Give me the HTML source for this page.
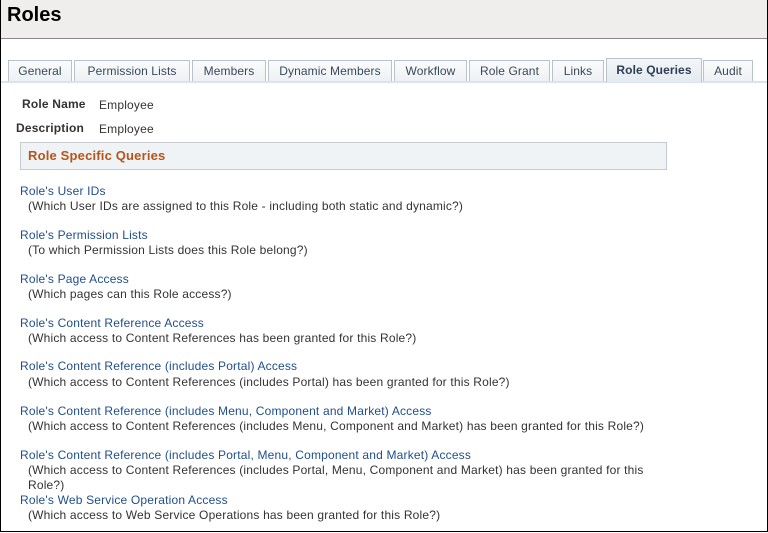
<!DOCTYPE html>
<html><head><style>
body{margin:0;width:768px;height:533px;overflow:hidden;font-family:"Liberation Sans",Arial,sans-serif;font-size:12px;color:#333;background:#fff;letter-spacing:0.18px}
.frame{position:absolute;left:0;top:0;width:766px;height:531px;border:1px solid #000;border-top:none}
.hdr{position:absolute;left:1px;top:0;width:766px;height:38px;background:#efeeec;border-bottom:1px solid #8a8a8a}
.hdr h1{margin:0;position:absolute;left:6px;top:4px;font-size:20px;font-weight:bold;color:#000;letter-spacing:0}
.tab{position:absolute;top:60px;height:20px;line-height:21px;border:1px solid #b8c2cc;border-bottom:none;background:linear-gradient(#fafbfc,#eef1f4);color:#3a4a5a;text-align:center;font-size:12px;letter-spacing:0.1px}
.tab.act{top:58px;height:23px;line-height:22px;font-weight:bold;background:linear-gradient(#f3f6f9,#e3eaf1);color:#2e3e50}
.tline{position:absolute;left:1px;top:81px;width:766px;height:2px;background:#dbe4ee}
.a{position:absolute;white-space:nowrap}
.lk{color:#1f4e8c;left:20px}
.ds{color:#333;left:28px}
.box{position:absolute;left:20px;top:142px;width:645px;height:26px;border:1px solid #c4cbd2;background:#f0f3f5}
.box span{position:absolute;left:7px;top:5px;color:#b5551b;font-weight:bold;font-size:13px}
</style></head><body>
<div class="frame"></div>
<div class="hdr"><h1>Roles</h1></div>
<div class="tline"></div>
<div class="tab" style="left:8px;width:62px">General</div>
<div class="tab" style="left:74px;width:114px">Permission Lists</div>
<div class="tab" style="left:192px;width:72px">Members</div>
<div class="tab" style="left:268px;width:122px">Dynamic Members</div>
<div class="tab" style="left:394px;width:71px">Workflow</div>
<div class="tab" style="left:469px;width:79px">Role Grant</div>
<div class="tab" style="left:552px;width:50px">Links</div>
<div class="tab act" style="left:606px;width:94px">Role Queries</div>
<div class="tab" style="left:703px;width:48px">Audit</div>
<div class="a" style="left:22px;top:97px;font-weight:bold">Role Name</div>
<div class="a" style="left:99px;top:98px">Employee</div>
<div class="a" style="left:16px;top:121px;font-weight:bold">Description</div>
<div class="a" style="left:99px;top:122px">Employee</div>
<div class="box"><span>Role Specific Queries</span></div>
<div class="a lk" style="top:184px">Role's User IDs</div>
<div class="a ds" style="top:199px">(Which User IDs are assigned to this Role - including both static and dynamic?)</div>
<div class="a lk" style="top:228px">Role's Permission Lists</div>
<div class="a ds" style="top:243px">(To which Permission Lists does this Role belong?)</div>
<div class="a lk" style="top:272px">Role's Page Access</div>
<div class="a ds" style="top:287px">(Which pages can this Role access?)</div>
<div class="a lk" style="top:316px">Role's Content Reference Access</div>
<div class="a ds" style="top:331px">(Which access to Content References has been granted for this Role?)</div>
<div class="a lk" style="top:359px">Role's Content Reference (includes Portal) Access</div>
<div class="a ds" style="top:375px">(Which access to Content References (includes Portal) has been granted for this Role?)</div>
<div class="a lk" style="top:404px">Role's Content Reference (includes Menu, Component and Market) Access</div>
<div class="a ds" style="top:419px">(Which access to Content References (includes Menu, Component and Market) has been granted for this Role?)</div>
<div class="a lk" style="top:448px">Role's Content Reference (includes Portal, Menu, Component and Market) Access</div>
<div class="a ds" style="top:463px">(Which access to Content References (includes Portal, Menu, Component and Market) has been granted for this</div>
<div class="a ds" style="top:478px">Role?)</div>
<div class="a lk" style="top:493px">Role's Web Service Operation Access</div>
<div class="a ds" style="top:508px">(Which access to Web Service Operations has been granted for this Role?)</div>
</body></html>
